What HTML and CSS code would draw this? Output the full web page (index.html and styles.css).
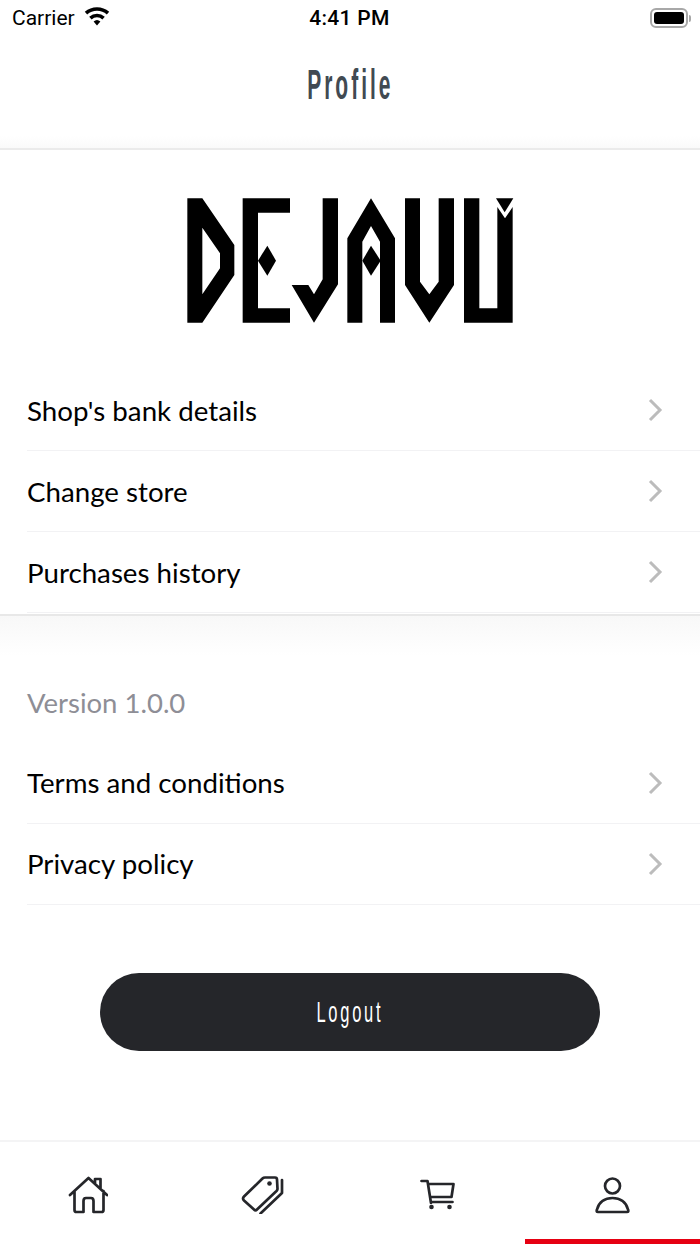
FILE: index.html
```html
<!DOCTYPE html>
<html>
<head>
    <title>Profile</title>
    <link rel="stylesheet" href="styles.css">
</head>
<body>
    <div class="status">
        <div class="status-left">
            <span>Carrier</span>
            <svg class="wifi" viewBox="0 0 26 20" width="26" height="20">
                <path d="M13 18.5 9.6 14.6a5 5 0 0 1 6.8 0z" fill="#000"/>
                <path d="M7.6 12.4 5.2 9.7a11.8 11.8 0 0 1 15.6 0l-2.4 2.7a8.2 8.2 0 0 0-10.8 0z" fill="#000"/>
                <path d="M3.2 7.5.8 4.8a18.4 18.4 0 0 1 24.4 0l-2.4 2.7a14.8 14.8 0 0 0-19.6 0z" fill="#000"/>
            </svg>
        </div>
        <div class="status-time">4:41 PM</div>
        <div class="status-right">
            <div class="battery"><div class="battery-fill"></div></div>
            <div class="battery-cap"></div>
        </div>
    </div>

    <div class="header"><span class="title">Profile</span></div>

    <div class="logo">
        <svg viewBox="0 0 1080 450" width="360" height="150" role="img" aria-label="Dejavu logo">
            <path fill-rule="evenodd" d="M52 40H97L193 180V270L97 413H52ZM97 128V328L150 250V205Z"/>
            <path d="M218 40H360V83H264V370H360V413H218Z"/>
            <path d="M292 182 318 227 292 272 264 227Z"/>
            <path d="M456 40H504V298L432 413 365 300H415L432 328 458 283V40Z"/>
            <path d="M603 40 675 160V413H630V170L603 123 577 170V413H532V160Z"/>
            <path d="M603 182 632 227 603 272 577 227Z"/>
            <path d="M705 40H750V290L778 328 806 290V40H852V300L778 413 705 300Z"/>
            <path d="M882 40H928V370H982V66L1005 100 1028 66V413H882Z"/>
            <path d="M978 40H1030L1004 82Z"/>
        </svg>
    </div>

    <div class="list first">
        <div class="row"><span>Shop's bank details</span><svg class="chev" viewBox="0 0 16 26" width="16" height="26"><path d="M3 3 13 13 3 23"/></svg></div>
        <div class="row"><span>Change store</span><svg class="chev" viewBox="0 0 16 26" width="16" height="26"><path d="M3 3 13 13 3 23"/></svg></div>
        <div class="row"><span>Purchases history</span><svg class="chev" viewBox="0 0 16 26" width="16" height="26"><path d="M3 3 13 13 3 23"/></svg></div>
    </div>

    <div class="version">Version 1.0.0</div>

    <div class="list second">
        <div class="row"><span>Terms and conditions</span><svg class="chev" viewBox="0 0 16 26" width="16" height="26"><path d="M3 3 13 13 3 23"/></svg></div>
        <div class="row"><span>Privacy policy</span><svg class="chev" viewBox="0 0 16 26" width="16" height="26"><path d="M3 3 13 13 3 23"/></svg></div>
    </div>

    <div class="logout-wrap">
        <button class="logout"><span>Logout</span></button>
    </div>

    <div class="tabs">
        <div class="tab">
            <svg class="tab-icon" viewBox="0 0 40 40" width="40" height="40">
                <path d="M2 21 20.5 4 39 21M6.5 17V36Q6.5 38 8.5 38H15.5V27Q15.5 24 18 24H23Q25.5 24 25.5 27V38H33.5Q35.5 38 35.5 36V17M27 9V5H32.5V14"/>
            </svg>
        </div>
        <div class="tab">
            <svg class="tab-icon" viewBox="0 0 44 40" width="44" height="40">
                <path d="M3 22.5 21.5 4.5Q22.5 3.5 24 3.5H34Q36 3.500 36 5.5L36.5 15Q36.5 16 35.5 17L16 35.5Q14.5 37 13 35.5L3 26.5Q1 24.5 3 22.5ZM41 6V19L19.5 39.5"/>
                <circle cx="28.5" cy="9.5" r="2.3" class="solid"/>
            </svg>
        </div>
        <div class="tab">
            <svg class="tab-icon" viewBox="0 0 40 40" width="40" height="40">
                <path d="M3.5 7H9.5L13 29M10 10H35.5L33.5 23H12M13.5 28H34.5"/>
                <circle cx="13.5" cy="33" r="2.3" class="solid"/>
                <circle cx="31.5" cy="33" r="2.3" class="solid"/>
            </svg>
        </div>
        <div class="tab active">
            <svg class="tab-icon" viewBox="0 0 40 40" width="40" height="40">
                <circle cx="19.5" cy="12" r="7.5"/>
                <path d="M5 38Q3 38 4 35.5C6 28 12 24 19.5 24S33 28 35 35.5Q36 38 34 38Z"/>
            </svg>
        </div>
    </div>
</body>
</html>
```

FILE: styles.css
```css
* {
    box-sizing: border-box;
}

body {
    margin: 0;
    height: 1244px;
    overflow: hidden;
    background-color: #fff;
    color: #000;
    font-family: "Lato", "Noto Sans", sans-serif;
    display: flex;
    flex-direction: column;
}

/* status bar */
.status {
    height: 36px;
    display: grid;
    grid-template-columns: 1fr auto 1fr;
    align-items: center;
    padding: 0 9px 0 12px;
    font-family: "Roboto", sans-serif;
    font-size: 21px;
}

.status-left {
    display: flex;
    align-items: center;
    gap: 9px;
}

.wifi {
    margin-top: -3px;
}

.status-time {
    margin-right: 4px;
    font-weight: 500;
    letter-spacing: 0.3px;
}

.status-right {
    display: flex;
    justify-content: flex-end;
    align-items: center;
    gap: 1px;
}

.battery {
    width: 38px;
    height: 20px;
    border: 2px solid #a8a8a8;
    border-radius: 6px;
    padding: 2px;
}

.battery-fill {
    height: 100%;
    background-color: #000;
    border-radius: 3px;
}

.battery-cap {
    width: 2px;
    height: 7px;
    background-color: #a8a8a8;
    border-radius: 0 2px 2px 0;
}

/* header */
.header {
    height: 114px;
    padding-bottom: 14px;
    display: flex;
    justify-content: center;
    align-items: center;
    border-bottom: 2px solid #ebebeb;
    background: linear-gradient(#fff 100px, #fafafa);
}

.title {
    display: inline-block;
    font-family: "Liberation Sans", sans-serif;
    font-weight: bold;
    font-size: 42px;
    letter-spacing: 6px;
    color: #414a52;
    transform: scaleX(0.5);
}

.logo {
    height: 219px;
    padding-top: 35px;
    display: flex;
    justify-content: center;
}

.logo svg {
    display: block;
}

/* lists */
.list {
    padding-left: 27px;
    background-color: #fff;
}

.list.first {
    height: 246px;
    margin-top: 1px;
    border-bottom: 2px solid #e8e8e8;
}

.row {
    height: 81px;
    padding-right: 37px;
    display: flex;
    justify-content: space-between;
    align-items: center;
    font-size: 27.7px;
    border-bottom: 1px solid #f2f2f4;
}

.second .row span {
    margin-bottom: 2px;
}

.chev {
    fill: none;
    stroke: #bcbcbc;
    stroke-width: 3;
}

.version {
    height: 127px;
    padding: 70px 0 0 27px;
    font-size: 27.5px;
    color: #8e8e96;
    background: linear-gradient(#f8f8f8, #fff 40px);
}

.logout-wrap {
    flex: 1;
    padding-top: 68px;
    display: flex;
    justify-content: center;
    align-items: flex-start;
}

.logout {
    width: 500px;
    height: 78px;
    border: none;
    border-radius: 39px;
    background-color: #25262a;
    color: #fff;
    font-family: "Liberation Sans", sans-serif;
    font-size: 30px;
}

.logout span {
    display: inline-block;
    letter-spacing: 5px;
    transform: scaleX(0.55);
}

/* bottom tabs */
.tabs {
    height: 104px;
    display: grid;
    grid-template-columns: repeat(4, 1fr);
    border-top: 2px solid #f4f4f5;
}

.tab {
    display: flex;
    justify-content: center;
    padding-top: 32px;
    border-bottom: 5px solid transparent;
}

.tab.active {
    border-bottom-color: #e60012;
}

.tab-icon {
    fill: none;
    stroke: #25262a;
    stroke-width: 2.7;
    stroke-linejoin: round;
    stroke-linecap: round;
}

.tab-icon .solid {
    fill: #25262a;
    stroke: none;
}
```
